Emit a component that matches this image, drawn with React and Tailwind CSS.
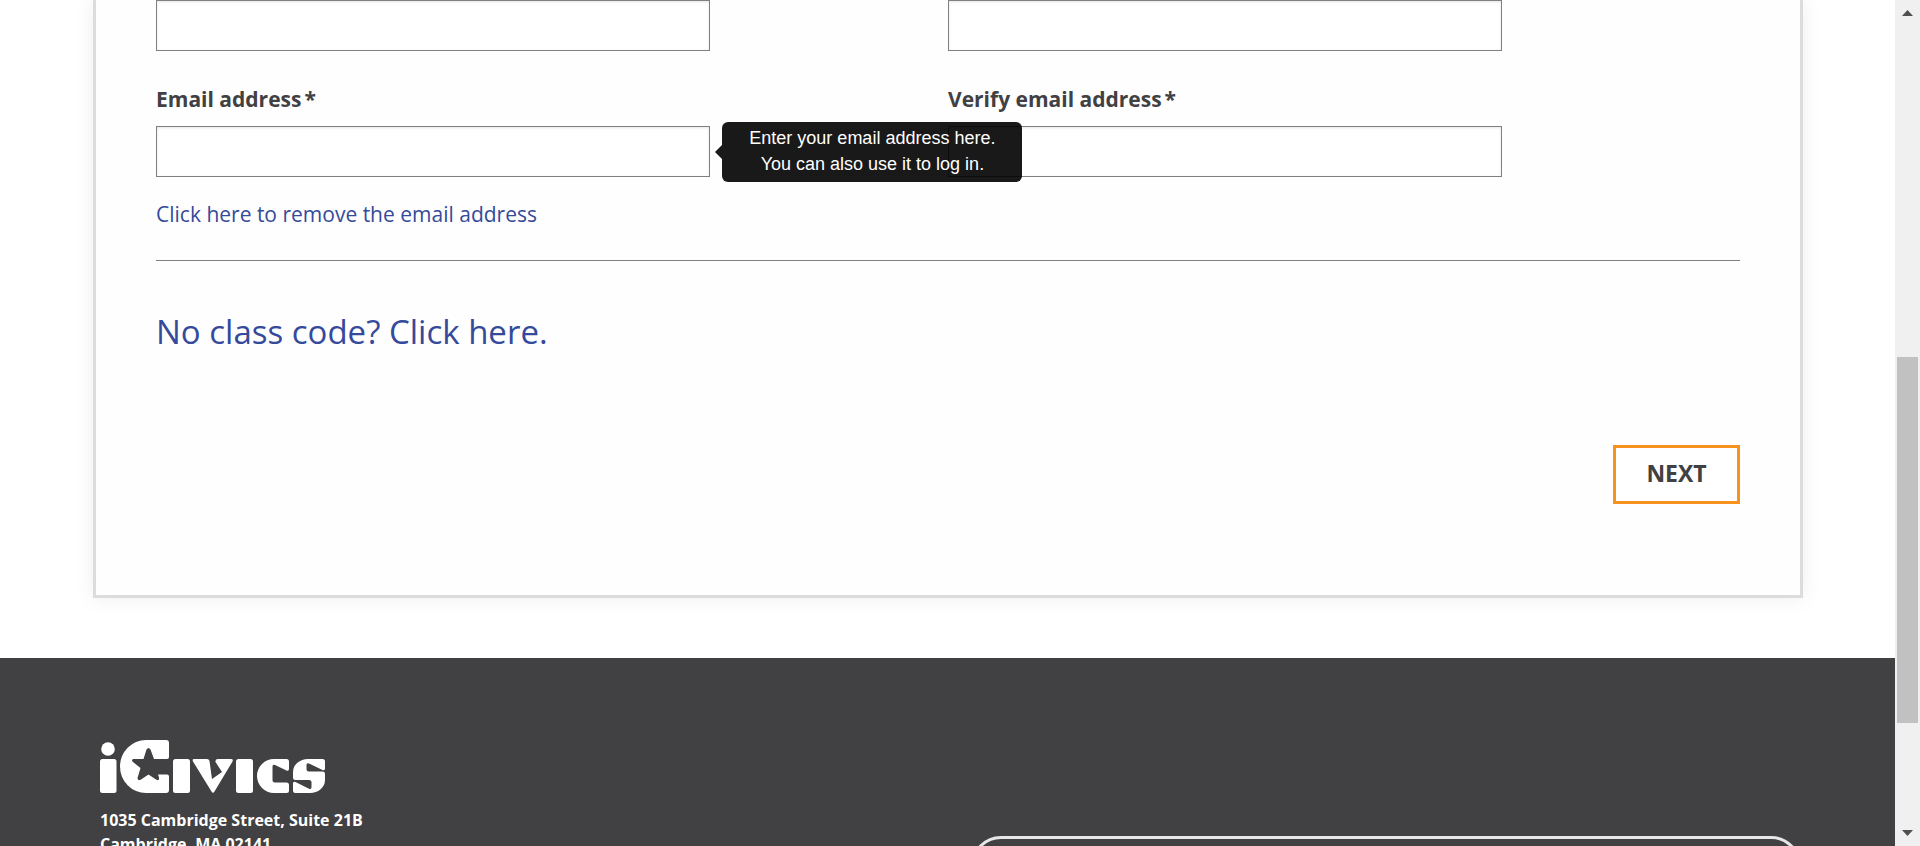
const inputClass =
  "block h-[51px] w-[70%] border border-[#808080] bg-white px-3 text-lg text-[#414042] shadow-[inset_0_1px_3px_rgba(0,0,0,0.1)] outline-none";

function Field({ id, label, type = "text", tip }) {
  return (
    <div>
      <label htmlFor={id} className="mb-[14px] flex h-[26px] items-center gap-[3px] text-[21px] leading-[26px] font-bold">
        {label}
        <span>*</span>
      </label>
      <div className="relative">
        <input id={id} type={type} className={inputClass} />
        {tip && (
          <div className="absolute top-1/2 left-[70%] z-10 ml-3 w-[300px] -translate-y-1/2 rounded-[6px] bg-black/90 pt-[3px] pb-[5px] text-center font-['Liberation_Sans',sans-serif] text-[18px] leading-[26px] text-white">
            {tip}
            <span className="absolute top-1/2 right-full -mt-[7px] border-y-[7px] border-r-[7px] border-y-transparent border-r-black/90" />
          </div>
        )}
      </div>
    </div>
  );
}

function Logo() {
  return (
    <svg viewBox="0 0 225 53" className="h-[53px] w-[225px]" fill="#fff" role="img" aria-label="iCivics">
      <circle cx="8" cy="9" r="6.8" />
      <rect x="0" y="19" width="16.5" height="34" rx="2.5" />
      <path fillRule="evenodd" d="M46 0H66Q69 0 69 3V17Q69 19 67 19H54L50.500 9.500Q48.500 6.500 46.500 9.500L43.500 19H33Q31 20.500 33 22L40.500 28L37.500 38Q38 41.500 41 39.500L48.500 34.500L56 39.500Q59.500 41.500 59 37.500L58 34.500H67Q69 34.500 69 36.500V50Q69 53 66 53H46A26 26.500 0 0 1 46 0Z" />
      <rect x="73" y="19" width="17" height="34" rx="2.500" />
      <path d="M94 19H107Q109 19 109.500 21L112 39L122 32L115.500 22Q115 19 118 19H131Q133.500 19 132.500 21.500L114.500 51.500Q113 54 111.500 51.500L93 21.500Q92 19 94 19Z" />
      <rect x="136" y="19" width="17" height="34" rx="2.500" />
      <path d="M174 19H186.500Q189 19 189 21.500V29Q189 31.500 186.500 30.500L175 25Q172.500 24 172.500 26.500V40Q172.500 42.500 175 42.500H186.500Q189 42.500 189 45V50.500Q189 53 186.500 53H174A17 17 0 0 1 174 19Z" />
      <path d="M208 19H222.500Q225 19 225 21.500V28.500Q225 31 222.500 30L209 23.500Q206.500 22.500 206.500 25V29Q206.500 31.500 209 31.500H222.500Q225 31.500 225 34V40A15 13 0 0 1 210 53H195.500Q193 53 193 50.500V43.500Q193 41 195.500 42L208.500 48.500Q211.500 50 211.500 47V42.500Q211.500 40 209 40H195.500Q193 40 193 37.500V32A15 13 0 0 1 208 19Z" />
    </svg>
  );
}

export default function App() {
  return (
    <div className="flex h-screen overflow-hidden bg-white font-['Open_Sans',sans-serif] text-[#414042]">
      <div className="flex min-w-0 flex-1 flex-col">
        <main className="shrink-0 pr-[92px] pb-[60px] pl-[93px]">
          <form
            className="border-[3px] border-t-0 border-[#dcdcdc] bg-[#fefefe] px-[60px] pb-[91px] shadow-[0_0_20px_rgba(0,0,0,0.07)]"
            onSubmit={(e) => e.preventDefault()}
          >
            <div className="grid grid-cols-2 gap-y-[35px]">
              <input aria-label="Password" type="password" className={inputClass} />
              <input aria-label="Verify password" type="password" className={inputClass} />
              <Field
                id="email"
                label="Email address"
                type="email"
                tip={
                  <>
                    Enter your email address here.
                    <br />
                    You can also use it to log in.
                  </>
                }
              />
              <Field id="verify-email" label="Verify email address" type="email" />
            </div>
            <a href="#remove" className="mt-6 block w-fit text-[21px] leading-[26px] text-[#354a9a]">
              Click here to remove the email address
            </a>
            <hr className="mt-[33px] h-px border-0 bg-[#808080]" />
            <a href="#no-code" className="mt-12 block w-fit text-[33px] leading-[46px] text-[#354a9a]">
              No class code? Click here.
            </a>
            <div className="mt-[90px] flex justify-end">
              <button type="submit" className="h-[59px] w-[127px] border-[3px] border-[#f7921e] bg-white pb-[2px] text-[23px] font-bold">
                NEXT
              </button>
            </div>
          </form>
        </main>
        <footer className="grid flex-1 grid-cols-2 bg-[#414042] pt-[82px] pr-[94px] pl-[100px] text-white">
          <div>
            <Logo />
            <address className="mt-[15px] text-[16px] leading-6 font-bold not-italic">
              1035 Cambridge Street, Suite 21B
              <br />
              Cambridge, MA 02141
            </address>
          </div>
          <div className="mt-24 ml-5 h-[200px] rounded-[30px] border-[3px] border-[#e6e7e8]" />
        </footer>
      </div>
      <div className="flex w-[25px] shrink-0 flex-col items-center justify-between bg-[#f0f0f0]" aria-hidden="true">
        <svg viewBox="0 0 11 6" className="mt-[10px] h-[6px] w-[11px]" fill="#505050">
          <path d="M5.500 0L11 6H0Z" />
        </svg>
        <div className="mt-[234px] h-[366px] w-[21px] bg-[#c1c1c1]" />
        <svg viewBox="0 0 11 6" className="mb-[10px] h-[6px] w-[11px]" fill="#505050">
          <path d="M0 0H11L5.500 6Z" />
        </svg>
      </div>
    </div>
  );
}
